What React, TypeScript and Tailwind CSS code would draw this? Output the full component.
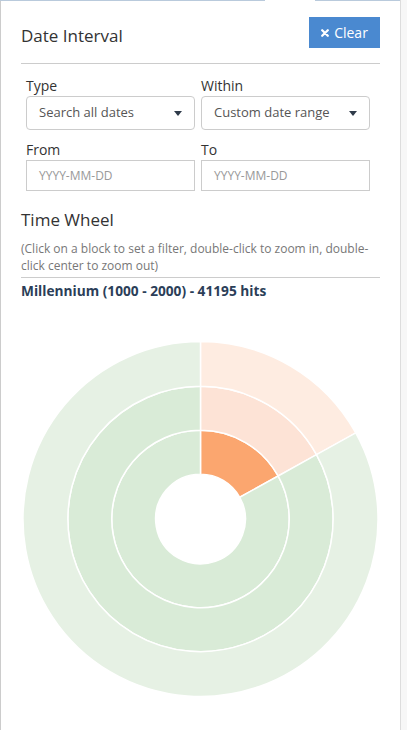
import React from 'react';

const CX = 180;
const CY = 180;

// annular sector, angles in degrees clockwise from 12 o'clock
function sector(r0: number, r1: number, a0: number, a1: number) {
  const rad = (a: number) => ((a - 90) * Math.PI) / 180;
  const pt = (r: number, a: number) => [CX + r * Math.cos(rad(a)), CY + r * Math.sin(rad(a))];
  const large = a1 - a0 > 180 ? 1 : 0;
  const [x0, y0] = pt(r1, a0);
  const [x1, y1] = pt(r1, a1);
  const [x2, y2] = pt(r0, a1);
  const [x3, y3] = pt(r0, a0);
  return `M${x0} ${y0} A${r1} ${r1} 0 ${large} 1 ${x1} ${y1} L${x2} ${y2} A${r0} ${r0} 0 ${large} 0 ${x3} ${y3} Z`;
}

const rings = [
  { r0: 45, r1: 89, hit: '#fba66f', rest: '#d9ebd7' },
  { r0: 89, r1: 133, hit: '#fde3d6', rest: '#d9ebd7' },
  { r0: 133, r1: 178, hit: '#feece1', rest: '#e6f1e4' },
];

function TimeWheel() {
  return (
    <svg width={360} height={360} viewBox="0 0 360 360">
      {rings.map((r, i) => (
        <g key={i} stroke="#ffffff" strokeWidth={1.5}>
          <path d={sector(r.r0, r.r1, 0, 61)} fill={r.hit} />
          <path d={sector(r.r0, r.r1, 61, 359.999)} fill={r.rest} />
        </g>
      ))}
    </svg>
  );
}

function Caret() {
  return (
    <svg width="8" height="5" viewBox="0 0 8 5">
      <path d="M0 0h8L4 5z" fill="#2f3b4a" />
    </svg>
  );
}

function SelectBox({ value }: { value: string }) {
  return (
    <div className="flex h-[34px] items-center justify-between rounded-[4px] border border-[#ccc] bg-white pl-[12px] pr-[12px] text-[13px] text-[#555]">
      <span>{value}</span>
      <Caret />
    </div>
  );
}

function DateInput() {
  return (
    <div className="flex h-[31px] items-center border border-[#ccc] bg-white pl-[12px] text-[12px] text-[#999]">
      YYYY-MM-DD
    </div>
  );
}

export default function App() {
  return (
    <div className="flex h-[730px] w-[407px] bg-[#f7f7f7] font-['Open_Sans',sans-serif] text-[#333]">
      <div className="w-[401px] border-r border-[#ddd] bg-white">
        <div className="flex h-px">
          <div className="w-[265px] bg-[#b9cadc]" />
          <div className="w-[50px] bg-white" />
          <div className="flex-1 bg-[#b9cadc]" />
        </div>
        <div className="min-h-[729px] border-l border-[#ccc] px-[20px]">
          <div className="flex items-start justify-between pt-[16px]">
            <h2 className="mt-[7px] text-[17px] leading-[24px] font-normal">Date Interval</h2>
            <button className="flex h-[31px] w-[71px] items-center justify-center gap-[5px] bg-[#4a89d0] text-[14px] text-white">
              <svg width="8" height="8" viewBox="0 0 10 10">
                <path d="M1.5 1.5l7 7M8.5 1.5l-7 7" stroke="#fff" strokeWidth="2.8" strokeLinecap="round" />
              </svg>
              Clear
            </button>
          </div>
          <div className="mt-[15px] h-px bg-[#ccc]" />

          <div className="ml-[5px] mr-[10px] mt-[12px] grid grid-cols-2 gap-x-[6px]">
            <div>
              <div className="text-[14px] leading-[20px]">Type</div>
              <SelectBox value="Search all dates" />
            </div>
            <div>
              <div className="text-[14px] leading-[20px]">Within</div>
              <SelectBox value="Custom date range" />
            </div>
            <div className="mt-[9px]">
              <div className="text-[14px] leading-[21px]">From</div>
              <DateInput />
            </div>
            <div className="mt-[9px]">
              <div className="text-[14px] leading-[21px]">To</div>
              <DateInput />
            </div>
          </div>

          <h3 className="mt-[17px] text-[17px] leading-[24px] font-normal">Time Wheel</h3>
          <p className="mt-[8px] text-[12px] leading-[17px] text-[#777]">
            (Click on a block to set a filter, double-click to zoom in, double-click center to zoom out)
          </p>
          <div className="mt-[3px] h-px bg-[#ccc]" />
          <div className="mt-[3px] text-[13.7px] leading-[20px] font-bold text-[#2b3e58]">
            Millennium (1000 - 2000) - 41195 hits
          </div>
          <div className="mt-[38px] flex justify-center">
            <TimeWheel />
          </div>
        </div>
      </div>
    </div>
  );
}
